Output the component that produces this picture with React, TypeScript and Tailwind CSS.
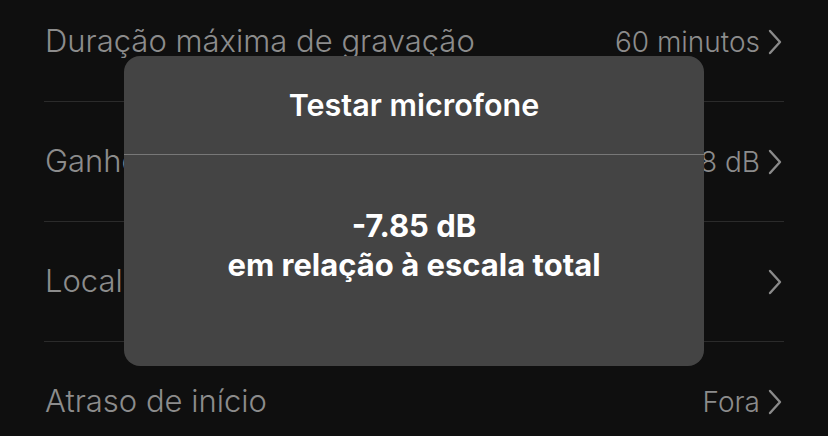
import React from "react";

const rows = [
  { label: "Duração máxima de gravação", value: "60 minutos" },
  { label: "Ganho", value: "+0.8 dB" },
  { label: "Localização", value: "" },
  { label: "Atraso de início", value: "Fora" },
];

function Chevron() {
  return (
    <svg width="14" height="26" viewBox="0 0 14 26" fill="none" className="ml-[8px]">
      <path d="M2 2 L12 13 L2 24" stroke="#8a8a8a" strokeWidth="2.4" strokeLinecap="round" strokeLinejoin="round" />
    </svg>
  );
}

export default function App() {
  return (
    <div
      className="relative w-[828px] h-[436px] overflow-hidden bg-[#0f0f0f]"
      style={{ fontFamily: "Inter, 'Noto Sans', sans-serif" }}
    >
      <div className="mt-[-18px] px-[44px]">
        {rows.map((r, i) => (
          <div
            key={i}
            className="flex h-[120px] items-center justify-between border-b border-[#2b2b2b]"
          >
            <span className="text-[31px] font-light text-[#8c8c8c] pl-[1px]">{r.label}</span>
            <span className="flex items-center text-[28px] font-light text-[#8c8c8c] pr-[2px]">
              {r.value}
              <Chevron />
            </span>
          </div>
        ))}
      </div>
      <div className="absolute left-[124px] top-[56px] w-[580px] h-[310px] rounded-[16px] bg-[#444444] flex flex-col">
        <div className="h-[99px] flex items-center justify-center border-b border-[#787878]">
          <span className="text-[30.5px] font-semibold text-white">Testar microfone</span>
        </div>
        <div className="flex-1 flex flex-col items-center pt-[51px] text-white text-[31px] font-bold leading-[39px]">
          <span>-7.85 dB</span>
          <span>em relação à escala total</span>
        </div>
      </div>
    </div>
  );
}
